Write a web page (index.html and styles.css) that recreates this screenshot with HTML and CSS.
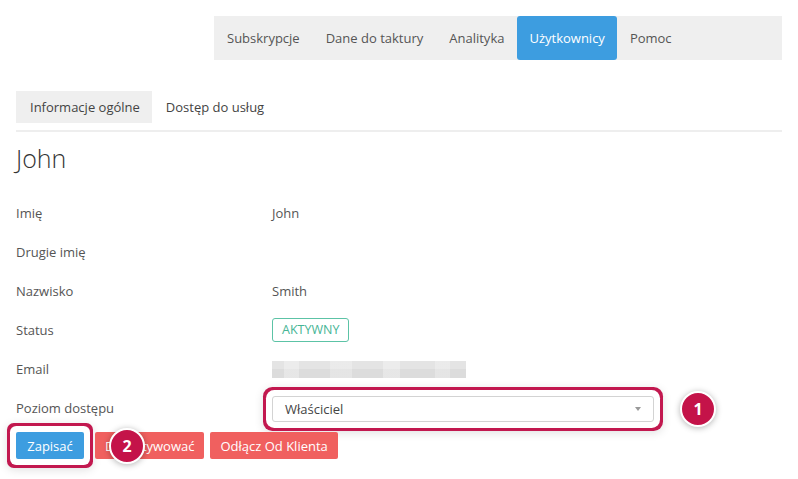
FILE: index.html
```html
<!DOCTYPE html>
<html lang="pl">
<head>
<meta charset="utf-8">
<title>Użytkownicy – John</title>
<link rel="stylesheet" href="styles.css">
</head>
<body>
<div class="page">
  <nav class="topnav">
    <a class="tab">Subskrypcje</a>
    <a class="tab">Dane do taktury</a>
    <a class="tab">Analityka</a>
    <a class="tab active">Użytkownicy</a>
    <a class="tab">Pomoc</a>
  </nav>

  <div class="subtabs">
    <a class="subtab active">Informacje ogólne</a>
    <a class="subtab">Dostęp do usług</a>
  </div>

  <h1 class="name">John</h1>

  <div class="details">
    <div class="row"><div class="label">Imię</div><div class="value">John</div></div>
    <div class="row"><div class="label">Drugie imię</div><div class="value"></div></div>
    <div class="row"><div class="label">Nazwisko</div><div class="value">Smith</div></div>
    <div class="row"><div class="label">Status</div><div class="value"><span class="status">AKTYWNY</span></div></div>
    <div class="row"><div class="label">Email</div><div class="value"><span class="blur"></span></div></div>
    <div class="row"><div class="label">Poziom dostępu</div>
      <div class="value">
        <div class="select highlight">
          <span>Właściciel</span>
          <span class="caret"></span>
          <span class="marker marker-1">1</span>
        </div>
      </div>
    </div>
  </div>

  <div class="actions">
    <button class="btn btn-blue highlight">Zapisać</button>
    <button class="btn btn-red btn-deact">Dezaktywować</button>
    <button class="btn btn-red">Odłącz Od Klienta</button>
    <span class="marker marker-2">2</span>
  </div>
</div>
</body>
</html>
```

FILE: styles.css
```css
* { box-sizing: border-box; }
html, body { margin: 0; padding: 0; background: #fff; }
body {
  font-family: "Open Sans", "Noto Sans", "Liberation Sans", sans-serif;
  font-size: 13px;
  color: #555;
}
.page {
  padding: 16px 16px 20px 16px;
  position: relative;
}
.topnav {
  margin-left: 198px;
  height: 44px;
  background: #efefef;
  display: flex;
  align-items: stretch;
}
.tab {
  display: flex;
  align-items: center;
  padding: 0 13px;
  color: #555;
  font-size: 13px;
  border-radius: 3px;
}
.tab.active {
  background: #3d9de0;
  color: #fff;
  padding: 0 12px;
}
.subtabs {
  margin-top: 31px;
  display: flex;
  padding-bottom: 7px;
  border-bottom: 2px solid #eeeeee;
}
.subtab {
  height: 32px;
  display: flex;
  align-items: center;
  padding: 0 13px 0 14px;
  color: #444;
}
.subtab.active { background: #efefef; padding-right: 12px; }
.name {
  margin: 9px 0 0 0;
  font-size: 25px;
  line-height: 34px;
  font-weight: 300;
  color: #333;
}
.details { margin-top: 18.5px; }
.row {
  display: flex;
  align-items: center;
  height: 39px;
}
.label { width: 256px; color: #555; }
.value { flex: 1; color: #555; position: relative; }
.status {
  display: inline-block;
  border: 1px solid #5cc3a6;
  color: #46b595;
  border-radius: 3px;
  padding: 0 9px;
  height: 24px;
  line-height: 22px;
  font-size: 12.5px;
}
.blur {
  display: block;
  width: 194px;
  height: 17px;
  margin-top: 1px;
  background:
    linear-gradient(90deg, rgba(255,255,255,0) 0 6%, rgba(255,255,255,.3) 6% 14%, rgba(255,255,255,0) 14% 30%, rgba(255,255,255,.25) 30% 41%, rgba(255,255,255,0) 41% 57%, rgba(255,255,255,.3) 57% 66%, rgba(255,255,255,0) 66% 84%, rgba(255,255,255,.25) 84% 92%, rgba(255,255,255,0) 92%),
    linear-gradient(180deg, #e4e4e4 0 50%, #dcdcdc 50%);
}
.select {
  width: 382px;
  height: 26px;
  border: 1px solid #d3d3d3;
  border-radius: 3px;
  background: #fff;
  display: flex;
  align-items: center;
  justify-content: space-between;
  padding: 0 12px 0 12px;
  color: #444;
  position: relative;
  top: 1px;
}
.caret {
  width: 0; height: 0;
  border-left: 3px solid transparent;
  border-right: 3px solid transparent;
  border-top: 4px solid #999;
}
.highlight {
  box-shadow: 0 0 0 6px #fff, 0 0 0 9px #c2184f, 0 2px 10px 9px rgba(0,0,0,.12);
}
.actions {
  margin-top: 4.5px;
  display: flex;
  align-items: center;
  position: relative;
}
.btn {
  font-family: "Open Sans", "Noto Sans", sans-serif;
  font-size: 13px;
  font-weight: 500;
  height: 27px;
  border: none;
  border-radius: 2px;
  color: #fff;
  padding: 0 12px;
  margin: 0;
  white-space: nowrap;
  cursor: pointer;
}
.btn-blue { background: #3d9de0; width: 68px; padding: 0; margin-right: 11px; }
.btn-red { background: #f0605f; margin-right: 6px; padding: 0 10px; }
.marker {
  position: absolute;
  width: 36px;
  height: 36px;
  border-radius: 50%;
  background: #c41349;
  color: #fff;
  border: 2px solid #fff;
  box-shadow: 0 1px 6px rgba(0,0,0,.3);
  display: flex;
  align-items: center;
  justify-content: center;
  font-weight: 700;
  font-size: 16px;
  font-family: "Open Sans", "Noto Sans", sans-serif;
}
.marker-1 { left: 407px; top: -6px; }
.marker-2 { left: 93px; top: -4.5px; }
```
